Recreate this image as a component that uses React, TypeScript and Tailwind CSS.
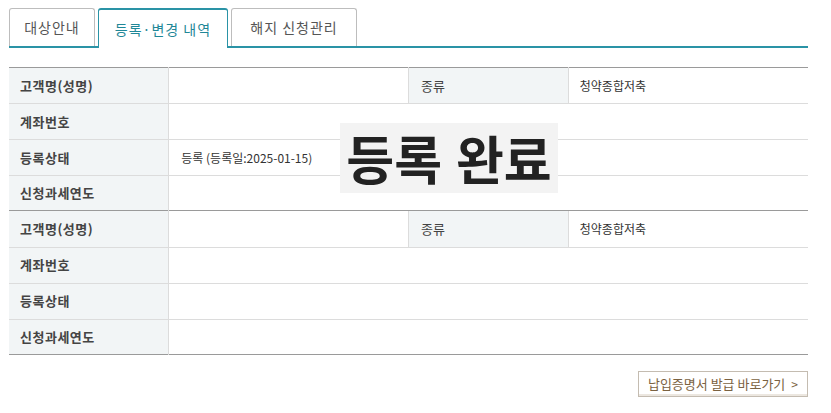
import React from 'react';

const tabs = [
  { label: '대상안내', width: 'w-[86px]', active: false },
  { label: '등록·변경 내역', width: 'w-[130px]', active: true },
  { label: '해지 신청관리', width: 'w-[126px]', active: false },
];

type Row = { label: string; value?: string; extraLabel?: string; extraValue?: string };

const firstTable: Row[] = [
  { label: '고객명(성명)', value: '', extraLabel: '종류', extraValue: '청약종합저축' },
  { label: '계좌번호', value: '' },
  { label: '등록상태', value: '등록 (등록일:2025-01-15)' },
  { label: '신청과세연도', value: '' },
];

const secondTable: Row[] = [
  { label: '고객명(성명)', value: '', extraLabel: '종류', extraValue: '청약종합저축' },
  { label: '계좌번호', value: '' },
  { label: '등록상태', value: '' },
  { label: '신청과세연도', value: '' },
];

function InfoTable({ rows, first }: { rows: Row[]; first?: boolean }) {
  return (
    <table
      className={`w-full table-fixed border-collapse border-b border-[#9a9a9a] text-[12px] ${first ? 'border-t' : ''}`}
    >
      <colgroup>
        <col className="w-[20%]" />
        <col className="w-[30%]" />
        <col className="w-[20%]" />
        <col className="w-[30%]" />
      </colgroup>
      <tbody>
        {rows.map((row, i) => (
          <tr key={i} className={i < rows.length - 1 ? 'h-[36px] border-b border-[#dcdcdc]' : 'h-[35px]'}>
            <th className="bg-[#f2f5f6] pl-[11px] text-left text-[13px] font-bold tracking-[0.5px] text-[#444]">
              {row.label}
            </th>
            {row.extraLabel ? (
              <>
                <td className="border-l border-[#dcdcdc] pl-[12px] text-[#333]">{row.value}</td>
                <th className="border-l border-[#dcdcdc] bg-[#f2f5f6] pl-[12px] text-left text-[13px] font-normal text-[#444]">
                  {row.extraLabel}
                </th>
                <td className="border-l border-[#dcdcdc] pl-[11px] text-[#333]">{row.extraValue}</td>
              </>
            ) : (
              <td colSpan={3} className="border-l border-[#dcdcdc] pl-[12px] text-[#333]">
                {row.value}
              </td>
            )}
          </tr>
        ))}
      </tbody>
    </table>
  );
}

export default function App() {
  return (
    <div className="relative min-h-[413px] w-[831px] bg-white pl-[9px] pr-[23px] pt-[8px] font-['Noto_Sans_CJK_KR','Noto_Sans',sans-serif]">
      {/* Tabs */}
      <div className="flex h-[40px] gap-[3px] border-b-2 border-[#2a93a6]">
        {tabs.map((t) =>
          t.active ? (
            <div
              key={t.label}
              className={`${t.width} -mb-[2px] flex h-[40px] items-center justify-center rounded-t-[3px] border-x border-t-2 border-[#2a93a6] bg-white text-[14px] tracking-[1px] text-[#1f8797]`}
            >
              {t.label}
            </div>
          ) : (
            <div
              key={t.label}
              className={`${t.width} flex h-[38px] items-center justify-center rounded-t-[3px] border-x border-t border-[#bdbdbd] bg-white text-[14px] tracking-[1px] text-[#555]`}
            >
              {t.label}
            </div>
          )
        )}
      </div>

      {/* Tables */}
      <div className="mt-[19px]">
        <InfoTable rows={firstTable} first />
        <InfoTable rows={secondTable} />
      </div>

      {/* Stamp */}
      <div className="absolute left-[340px] top-[123px] flex h-[70px] w-[218px] items-center justify-center gap-[14px] bg-[#f3f3f3] text-[52px] font-bold leading-none text-[#222]">
        <span>등록</span>
        <span>완료</span>
      </div>

      {/* Button */}
      <div className="mt-[16px] flex justify-end">
        <button className="flex h-[26px] items-center gap-[6px] border border-[#c4bcb1] bg-white px-[9px] text-[13px] text-[#7b6241] shadow-[inset_0_-2px_0_#ece7e0]">
          납입증명서 발급 바로가기
          <span className="text-[12px]">&gt;</span>
        </button>
      </div>
    </div>
  );
}
